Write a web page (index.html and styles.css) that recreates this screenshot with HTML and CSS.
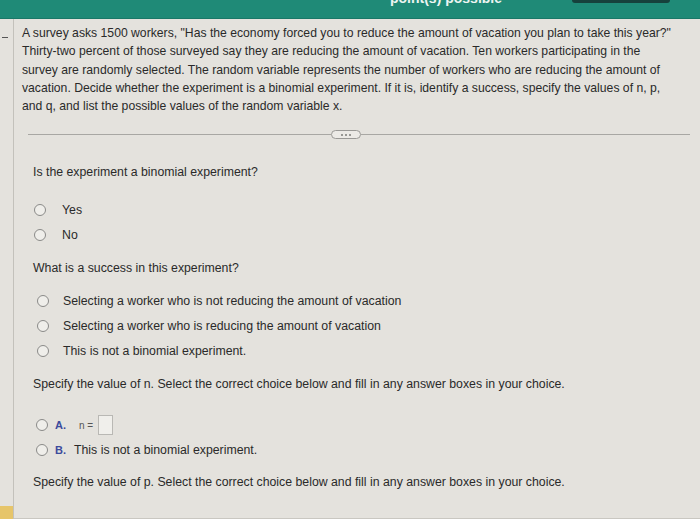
FILE: index.html
```html
<!DOCTYPE html>
<html lang="en">
<head>
<meta charset="utf-8">
<title>Binomial experiment question</title>
<link rel="stylesheet" href="styles.css">
</head>
<body>
<header class="topbar">
  <span class="points">point(s) possible</span>
  <span class="topbtn"></span>
</header>
<div class="main">
  <aside class="gutter">
    <span class="dash"></span>
    <span class="flag"></span>
  </aside>
  <section class="content">
    <p class="stem">A survey asks 1500 workers, "Has the economy forced you to reduce the amount of vacation you plan to take this year?" Thirty-two percent of those surveyed say they are reducing the amount of vacation. Ten workers participating in the survey are randomly selected. The random variable represents the number of workers who are reducing the amount of vacation. Decide whether the experiment is a binomial experiment. If it is, identify a success, specify the values of n, p, and q, and list the possible values of the random variable x.</p>
    <div class="divider"><span class="line left"></span><span class="pill"><i></i><i></i><i></i></span><span class="line right"></span></div>
    <div class="parts">
      <p class="q q1">Is the experiment a binomial experiment?</p>
      <ul class="choices yesno">
        <li><span class="radio"></span>Yes</li>
        <li><span class="radio"></span>No</li>
      </ul>
      <p class="q q2">What is a success in this experiment?</p>
      <ul class="choices opts">
        <li><span class="radio"></span>Selecting a worker who is not reducing the amount of vacation</li>
        <li><span class="radio"></span>Selecting a worker who is reducing the amount of vacation</li>
        <li><span class="radio"></span>This is not a binomial experiment.</li>
      </ul>
      <p class="q q3">Specify the value of n. Select the correct choice below and fill in any answer boxes in your choice.</p>
      <ul class="choices lettered">
        <li class="rowa"><span class="radio"></span><b class="letter">A.</b><span class="eq">n =</span><span class="box"></span></li>
        <li class="rowb"><span class="radio"></span><b class="letter">B.</b>This is not a binomial experiment.</li>
      </ul>
      <p class="q q4">Specify the value of p. Select the correct choice below and fill in any answer boxes in your choice.</p>
    </div>
  </section>
</div>
</body>
</html>
```

FILE: styles.css
```css
* { box-sizing: border-box; }
html, body { margin: 0; padding: 0; }
body {
  width: 700px;
  height: 519px;
  overflow: hidden;
  background: #e4e2dd;
  font-family: "Liberation Sans", Arial, sans-serif;
  color: #2a2a2a;
}
.topbar {
  height: 19px;
  background: #1f8a77;
  border-bottom: 1px solid #1a7868;
  display: flex;
  align-items: flex-start;
  overflow: hidden;
}
.points {
  margin-left: 390px;
  margin-top: -9px;
  font-size: 14px;
  line-height: 14px;
  font-weight: bold;
  color: #eef5f2;
}
.topbtn {
  margin-left: auto;
  margin-right: 30px;
  width: 98px;
  height: 3px;
  background: #16413c;
  border-radius: 0 0 4px 4px;
}
.main {
  display: flex;
  height: 500px;
}
.gutter {
  width: 14px;
  border-right: 1px solid #c3c1bb;
  display: flex;
  flex-direction: column;
}
.dash {
  display: block;
  width: 6px;
  height: 1px;
  background: #555;
  margin: 18px 0 0 2px;
}
.flag {
  display: block;
  margin-top: auto;
  height: 13px;
  background: #e6c56a;
}
.content {
  flex: 1;
  border-bottom: 1px solid #c9c7c1;
}
.stem {
  margin: 5px 0 0 8px;
  width: 656px;
  font-size: 12.2px;
  line-height: 18.3px;
}
.divider {
  display: flex;
  align-items: center;
  margin: 15px 10px 0 14px;
}
.line {
  height: 1px;
  background: #a8a7a3;
}
.line.left { flex: 303; }
.line.right { flex: 329; }
.pill {
  width: 30px;
  height: 9px;
  border: 1px solid #9a9996;
  border-radius: 5px;
  background: #eceae6;
  display: flex;
  align-items: center;
  justify-content: center;
  gap: 2px;
}
.pill i {
  width: 2px;
  height: 2px;
  background: #7d7c78;
  border-radius: 50%;
}
.parts {
  padding-left: 19px;
  font-size: 12.3px;
}
.q {
  margin: 0;
  line-height: 16px;
}
.q1 { margin-top: 25px; }
.q2 { margin-top: 16px; }
.q3 { margin-top: 16px; }
.q4 { margin-top: 15px; }
.choices {
  list-style: none;
  margin: 0;
  padding: 0;
}
.choices li {
  display: flex;
  align-items: center;
  height: 18px;
}
.radio {
  width: 12px;
  height: 12px;
  border: 1.5px solid #8a8a88;
  border-radius: 50%;
  background: #efeeea;
  flex: none;
}
.yesno { margin-top: 21px; }
.yesno li { gap: 16px; padding-left: 1px; }
.yesno li + li { margin-top: 7px; }
.opts { margin-top: 16px; }
.opts li { gap: 14px; padding-left: 4px; }
.opts li + li { margin-top: 7px; }
.lettered { margin-top: 22px; }
.lettered li { padding-left: 3px; }
.rowa { height: 22px !important; }
.rowb { margin-top: 5px; }
.letter {
  color: #3b4b9c;
  font-size: 11px;
  margin-left: 7px;
  margin-right: 8px;
}
.eq {
  font-size: 10px;
  color: #555;
  margin-left: 5px;
  margin-right: 5px;
}
.box {
  width: 15px;
  height: 20px;
  border: 1px solid #b9b8b4;
  background: #f0efeb;
}
```
